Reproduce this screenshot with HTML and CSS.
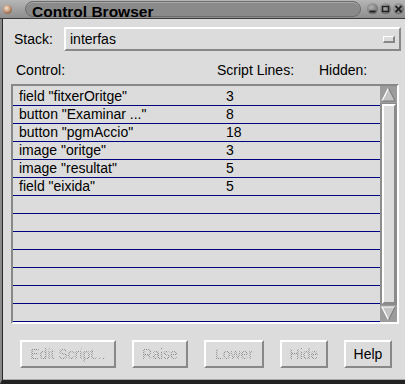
FILE: index.html
```html
<!DOCTYPE html>
<html lang="ca">
<head>
    <meta charset="UTF-8">
    <title>Control Browser</title>
    <link rel="stylesheet" href="styles.css">
</head>
<body>

<div class="window">
    <div class="titlebar">
        <span class="ball"></span>
        <div class="title-pill"><span class="title">Control Browser</span></div>
        <svg class="win-btns" width="39" height="14" viewBox="0 0 39 14">
            <defs>
                <radialGradient id="knob" cx="40%" cy="35%" r="65%">
                    <stop offset="0" stop-color="#b0b0b0"/>
                    <stop offset="1" stop-color="#6a6a6a"/>
                </radialGradient>
            </defs>
            <circle cx="6.5" cy="7" r="6" fill="url(#knob)" stroke="#a6a6a6" stroke-width="0.8"/>
            <circle cx="19.5" cy="7" r="6" fill="url(#knob)" stroke="#a6a6a6" stroke-width="0.8"/>
            <circle cx="32.5" cy="7" r="6" fill="url(#knob)" stroke="#a6a6a6" stroke-width="0.8"/>
            <line x1="3.5" y1="9.5" x2="9.5" y2="9.5" stroke="#222" stroke-width="2"/>
            <rect x="16.5" y="4.5" width="6" height="5" fill="none" stroke="#222" stroke-width="1.5"/>
            <line x1="29.5" y1="4" x2="35.5" y2="10" stroke="#222" stroke-width="1.8"/>
            <line x1="35.5" y1="4" x2="29.5" y2="10" stroke="#222" stroke-width="1.8"/>
        </svg>
    </div>

    <div class="body">
        <div class="stack-row">
            <label>Stack:</label>
            <div class="select"><span>interfas</span><span class="select-knob"></span></div>
        </div>

        <div class="col-labels">
            <span>Control:</span>
            <span>Script Lines:</span>
            <span>Hidden:</span>
        </div>

        <div class="list">
            <div class="rows">
                <div class="row"><span>field "fitxerOritge"</span><span>3</span></div>
                <div class="row"><span>button "Examinar ..."</span><span>8</span></div>
                <div class="row"><span>button "pgmAccio"</span><span>18</span></div>
                <div class="row"><span>image "oritge"</span><span>3</span></div>
                <div class="row"><span>image "resultat"</span><span>5</span></div>
                <div class="row"><span>field "eixida"</span><span>5</span></div>
                <div class="row"></div>
                <div class="row"></div>
                <div class="row"></div>
                <div class="row"></div>
                <div class="row"></div>
                <div class="row"></div>
                <div class="row"></div>
            </div>
            <div class="scrollbar">
                <svg class="arrow" width="17" height="17" viewBox="0 0 17 17">
                    <polygon points="8.5,2 2,15 15,15" fill="#c4c4c4"/>
                    <polyline points="2,15 8.5,2" fill="none" stroke="#fff" stroke-width="1.2"/>
                    <polyline points="8.5,2 15,15 2,15" fill="none" stroke="#777" stroke-width="1"/>
                </svg>
                <div class="thumb"></div>
                <svg class="arrow" width="17" height="17" viewBox="0 0 17 17">
                    <polygon points="2,2 15,2 8.5,15" fill="#c4c4c4"/>
                    <polyline points="8.5,15 2,2 15,2" fill="none" stroke="#fff" stroke-width="1.2"/>
                    <polyline points="15,2 8.5,15" fill="none" stroke="#777" stroke-width="1"/>
                </svg>
            </div>
        </div>

        <div class="buttons">
            <button class="btn w-edit" disabled><span class="stipple">Edit Script...</span></button>
            <button class="btn w-raise" disabled><span class="stipple">Raise</span></button>
            <button class="btn w-lower" disabled><span class="stipple">Lower</span></button>
            <button class="btn w-hide" disabled><span class="stipple">Hide</span></button>
            <button class="btn w-help">Help</button>
        </div>
    </div>
</div>

</body>
</html>
```

FILE: styles.css
```css
body {
    margin: 0;
    font-family: "Liberation Sans", Arial, sans-serif;
    font-size: 14px;
    color: #000;
    background-color: #dcdcdc;
}
.window {
    width: 405px;
    height: 384px;
    display: flex;
    flex-direction: column;
    overflow: hidden;
}
.titlebar {
    height: 18px;
    flex-shrink: 0;
    display: flex;
    align-items: center;
    background: linear-gradient(#b6b6b6, #8e8e8e);
    border-bottom: 1px solid #3a3a3a;
}
.ball {
    width: 9px;
    height: 9px;
    margin-left: 3px;
    border-radius: 50%;
    background: radial-gradient(circle at 40% 35%, #f6e8d6 0, #c49474 45%, #5e4028 100%);
}
.title-pill {
    flex: 1;
    height: 14px;
    margin-left: 13px;
    margin-right: 5px;
    border-radius: 8px;
    background: #8a8a8a;
    border: 1px solid #6c6c6c;
    box-shadow: inset 0 1px 0 #a8a8a8;
}
.title {
    display: block;
    margin-left: 6px;
    padding-top: 2px;
    font-weight: bold;
    font-size: 15.5px;
    line-height: 16px;
    white-space: nowrap;
}
.win-btns {
    flex-shrink: 0;
    display: block;
}
.body {
    flex: 1;
    border-left: 2px solid #8a8a8a;
    border-bottom: 4px solid #222;
    box-shadow: inset 1px 0 0 #2a2a2a, inset 0 -1px 0 #a8a8a8;
    padding-top: 8px;
}
.stack-row {
    display: flex;
    align-items: center;
    height: 24px;
    margin-left: 12px;
}
.stack-row label {
    width: 50px;
}
.select {
    box-sizing: border-box;
    width: 337px;
    height: 24px;
    display: flex;
    align-items: center;
    justify-content: space-between;
    padding-left: 4px;
    border: 2px solid;
    border-color: #fff #888 #888 #fff;
}
.select-knob {
    box-sizing: border-box;
    width: 12px;
    height: 7px;
    margin-right: 4px;
    border: 1px solid #fff;
    border-right: 2px solid #888;
    border-bottom: 2px solid #888;
}
.col-labels {
    display: grid;
    grid-template-columns: 201px 102px auto;
    margin-top: 11px;
    padding-left: 14px;
    height: 16px;
    line-height: 16px;
}
.list {
    display: flex;
    width: 388px;
    height: 240px;
    box-sizing: border-box;
    margin-top: 6px;
    margin-left: 9px;
    border: 2px solid;
    border-color: #888 #fff #fff #888;
}
.rows {
    width: 367px;
    padding-top: 2px;
}
.row {
    display: grid;
    grid-template-columns: 207px auto;
    height: 17px;
    line-height: 17px;
    padding-left: 6px;
    border-bottom: 1px solid #000080;
    white-space: nowrap;
}
.scrollbar {
    width: 17px;
    display: flex;
    flex-direction: column;
    background-color: #8c8c8c;
}
.arrow {
    display: block;
    flex-shrink: 0;
    background-color: #9c9c9c;
}
.thumb {
    flex: 1;
    margin: 1px 1px 1px 2px;
    background-color: #dcdcdc;
    border: 2px solid;
    border-color: #fff #8a8a8a #8a8a8a #fff;
}
.buttons {
    display: flex;
    gap: 16px;
    margin-top: 16px;
    margin-left: 18px;
}
.btn {
    box-sizing: border-box;
    height: 28px;
    padding: 0;
    font-family: inherit;
    font-size: 14px;
    color: #000;
    background-color: #dcdcdc;
    border: 2px solid;
    border-color: #fff #888 #888 #fff;
}
.w-edit { width: 96px; }
.w-raise { width: 56px; }
.w-lower { width: 60px; }
.w-hide { width: 48px; }
.w-help { width: 48px; }
.stipple {
    color: transparent;
    background: repeating-conic-gradient(#8a8a8a 0 25%, transparent 0 50%) 0 0 / 2px 2px;
    -webkit-background-clip: text;
    background-clip: text;
}
```
